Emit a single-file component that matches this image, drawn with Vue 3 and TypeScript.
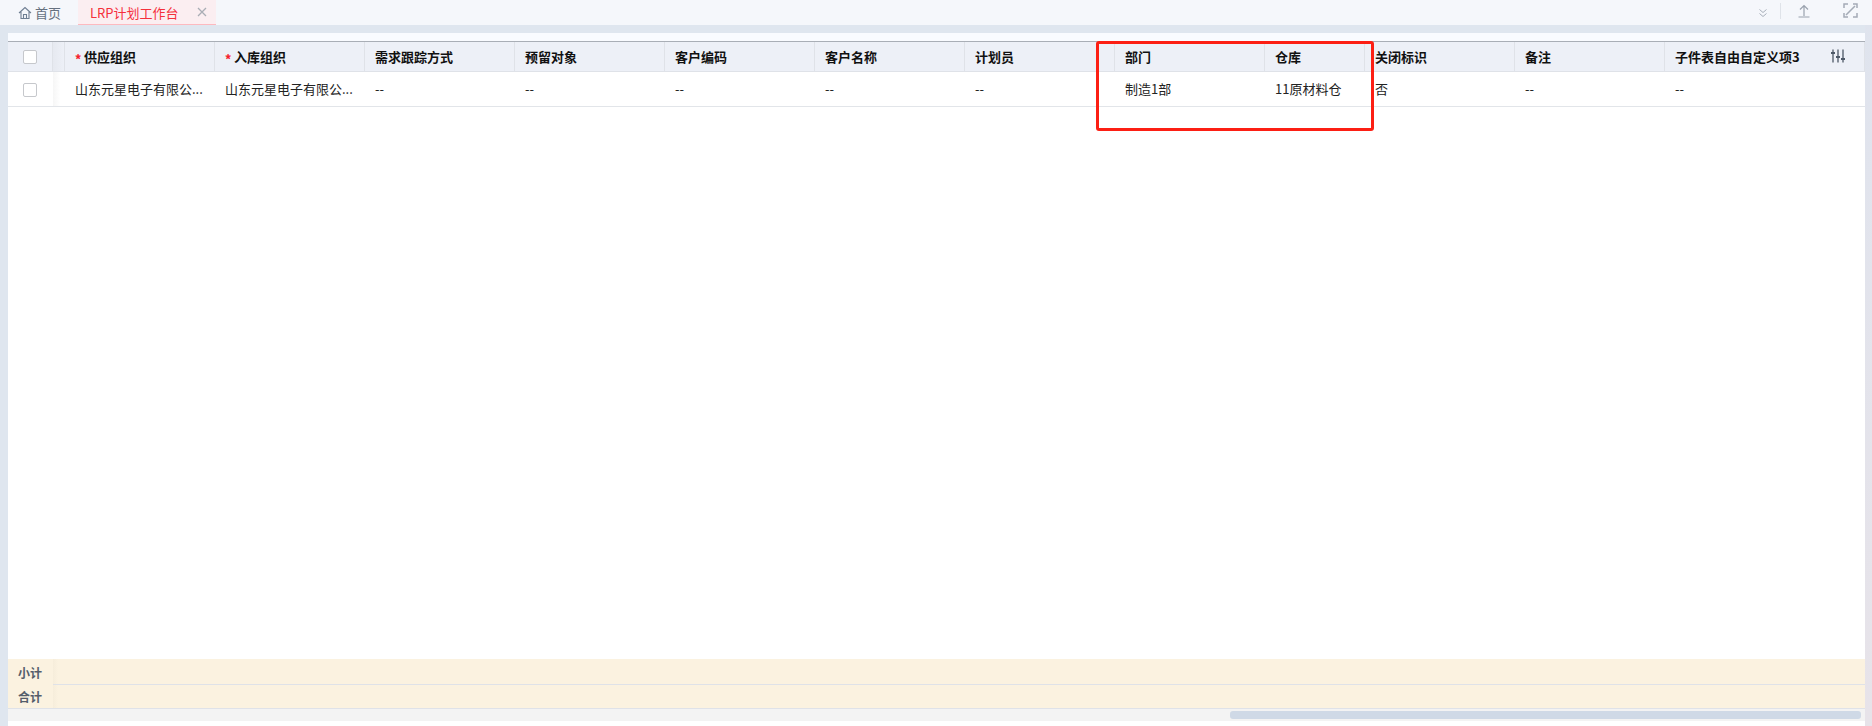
<script setup lang="ts">
const cols = [
  { t: '供应组织', w: 150, req: true, v: '山东元星电子有限公...' },
  { t: '入库组织', w: 150, req: true, v: '山东元星电子有限公...' },
  { t: '需求跟踪方式', w: 150, v: '--' },
  { t: '预留对象', w: 150, v: '--' },
  { t: '客户编码', w: 150, v: '--' },
  { t: '客户名称', w: 150, v: '--' },
  { t: '计划员', w: 150, v: '--' },
  { t: '部门', w: 150, v: '制造1部' },
  { t: '仓库', w: 100, v: '11原材料仓' },
  { t: '关闭标识', w: 150, v: '否' },
  { t: '备注', w: 150, v: '--' },
  { t: '子件表自由自定义项3', w: 200, v: '--', last: true },
]
</script>

<template>
  <div class="page">
    <div class="tabs">
      <div class="tab home">
        <svg width="14" height="14" viewBox="0 0 14 14" fill="none" stroke="#6f7f93" stroke-width="1.1"><path d="M1 7 7 1.5 13 7M3 5.8V12.5H11V5.8M5.5 12.5V8.5H8.5V12.5"/></svg>
        <span>首页</span>
      </div>
      <div class="tab active">
        <span>LRP计划工作台</span>
        <svg width="10" height="10" viewBox="0 0 10 10" stroke="#a9adb5" stroke-width="1.3"><path d="M1 1 9 9M9 1 1 9"/></svg>
      </div>
      <div class="tools">
        <svg class="t1" width="10" height="10" viewBox="0 0 10 10" fill="none" stroke="#a8afba" stroke-width="1"><path d="M1.5 1.5 5 4.5 8.5 1.5M1.5 5.5 5 8.5 8.5 5.5"/></svg>
        <i class="sep"></i>
        <svg class="t2" width="12" height="14" viewBox="0 0 12 14" fill="none" stroke="#9aa2ae" stroke-width="1.2"><path d="M6 12V2M2 5.5 6 1.5 10 5.5M0.5 13H11.5"/></svg>
        <svg class="t3" width="15" height="15" viewBox="0 0 15 15" fill="none" stroke="#a4abb6" stroke-width="1.5"><path d="M1 5V1H5M10 1H14V5M14 10V14H10M5 14H1V10M3 12 12 3"/></svg>
      </div>
    </div>
    <div class="panel">
      <div class="strip"></div>
      <div class="table">
        <div class="row head">
          <div class="fix"><span class="cb"></span></div>
          <div class="idx"></div>
          <div v-for="c in cols" :key="c.t" class="cell" :style="{ width: c.w + 'px' }">
            <b v-if="c.req" class="req">*</b>{{ c.t }}
          </div>
          <svg class="set" width="16" height="14" viewBox="0 0 16 14" fill="none" stroke="#4d5867" stroke-width="1.3"><path d="M3 0.5V13.5M8 0.5V13.5M13 0.5V13.5"/><path d="M1 4H5M6 8H10M11 10H15" stroke-width="2.2"/></svg>
        </div>
        <div class="row body">
          <div class="fix"><span class="cb"></span></div>
          <div class="idx plain"></div>
          <div v-for="c in cols" :key="c.t" class="cell" :style="{ width: c.w + 'px' }">{{ c.v }}</div>
        </div>
      </div>
      <div class="foot">
        <div class="frow r1"><div class="lab">小计</div><div class="fill"></div></div>
        <div class="frow r2"><div class="lab">合计</div><div class="fill"></div></div>
      </div>
      <div class="scroll"><div class="thumb"></div></div>
    </div>
    <div class="mark"></div>
  </div>
</template>

<style>
html, body { margin: 0; background: #fff; }
</style>

<style scoped>
.page { position: relative; width: 1872px; height: 726px; overflow: hidden; background: linear-gradient(#dfe4ee, #e7e3e9) right / 7px 100% no-repeat, #dfe6ef; font-family: "Noto Sans CJK SC", "Liberation Sans", sans-serif; font-size: 13px; color: #333; display: flex; flex-direction: column; }
.tabs { height: 25px; background: #f5f7fb; display: flex; align-items: stretch; flex: none; }
.tab { display: flex; align-items: center; height: 25px; box-sizing: border-box; }
.home { width: 78px; padding-left: 18px; gap: 3px; color: #66717f; font-size: 13px; }
.active { width: 138px; padding-left: 12px; gap: 18px; background: #fbeef1; border-bottom: 1px solid #fdb9bf; color: #f5303b; font-size: 13px; }
.tools { margin-left: auto; position: relative; width: 130px; }
.t1 { position: absolute; left: 16px; top: 8px; }
.sep { position: absolute; left: 38px; top: 3px; width: 1px; height: 16px; background: #dfe3e9; }
.t2 { position: absolute; left: 56px; top: 4px; }
.t3 { position: absolute; left: 101px; top: 3px; }
.panel { margin: 8px 7px 0 8px; flex: 1; background: #fff; display: flex; flex-direction: column; min-height: 0; }
.strip { height: 8px; background: #f9fbff; flex: none; }
.table { flex: 1; border-top: 1px solid #a9aeb6; }
.row { display: flex; position: relative; box-sizing: border-box; }
.head { height: 30px; background: #edf0f7; border-bottom: 1px solid #dfe2e8; font-weight: 700; color: #111; }
.body { height: 35px; border-bottom: 1px solid #e2e5e9; color: #222; }
.fix { width: 45px; flex: none; display: flex; align-items: center; justify-content: center; border-right: 1px solid #dfe2e8; box-sizing: border-box; padding-right: 1px; }
.body .fix { border-right: 0; padding-top: 2px; }
.idx { width: 12px; flex: none; border-right: 1px solid #dfe2e8; box-sizing: border-box; background: linear-gradient(to right, #e6e9f0, #edf0f7); }
.idx.plain { border: 0; background: linear-gradient(to right, #f6f6f6, #fff 60%); }
.cb { width: 12px; height: 12px; border: 1px solid #c6c8cc; border-radius: 2px; background: #fff; }
.cell { flex: none; box-sizing: border-box; padding-left: 10px; display: flex; align-items: center; border-right: 1px solid #dfe2e8; white-space: nowrap; overflow: hidden; }
.body .cell { border-right: 0; padding-bottom: 2px; }
.req { color: #f5222d; margin-right: 4px; font-size: 12px; width: 5px; padding-top: 4px; }
.set { position: absolute; right: 19px; top: 7px; }
.foot { flex: none; background: #fbf2e0; }
.frow { display: flex; box-sizing: border-box; }
.r1 { height: 26px; }
.r2 { height: 24px; border-bottom: 1px solid #dfe2e8; }
.lab { width: 45px; padding-left: 10px; box-sizing: border-box; font-size: 12px; font-weight: 700; color: #555e6b; display: flex; align-items: center; }
.fill { flex: 1; background: linear-gradient(to right, #f6eddb, #fbf2e0 5px); }
.r1 .fill { border-bottom: 1px solid #dfe2e8; }
.scroll { height: 12px; background: #f3f3f3; flex: none; margin-bottom: 5px; position: relative; }
.thumb { position: absolute; left: 1222px; right: 4px; top: 2px; height: 8px; border-radius: 3px; background: #cfd9e6; }
.mark { position: absolute; left: 1096px; top: 41px; width: 278px; height: 90px; box-sizing: border-box; border: 3px solid #fc1f14; border-radius: 3px; }
</style>
